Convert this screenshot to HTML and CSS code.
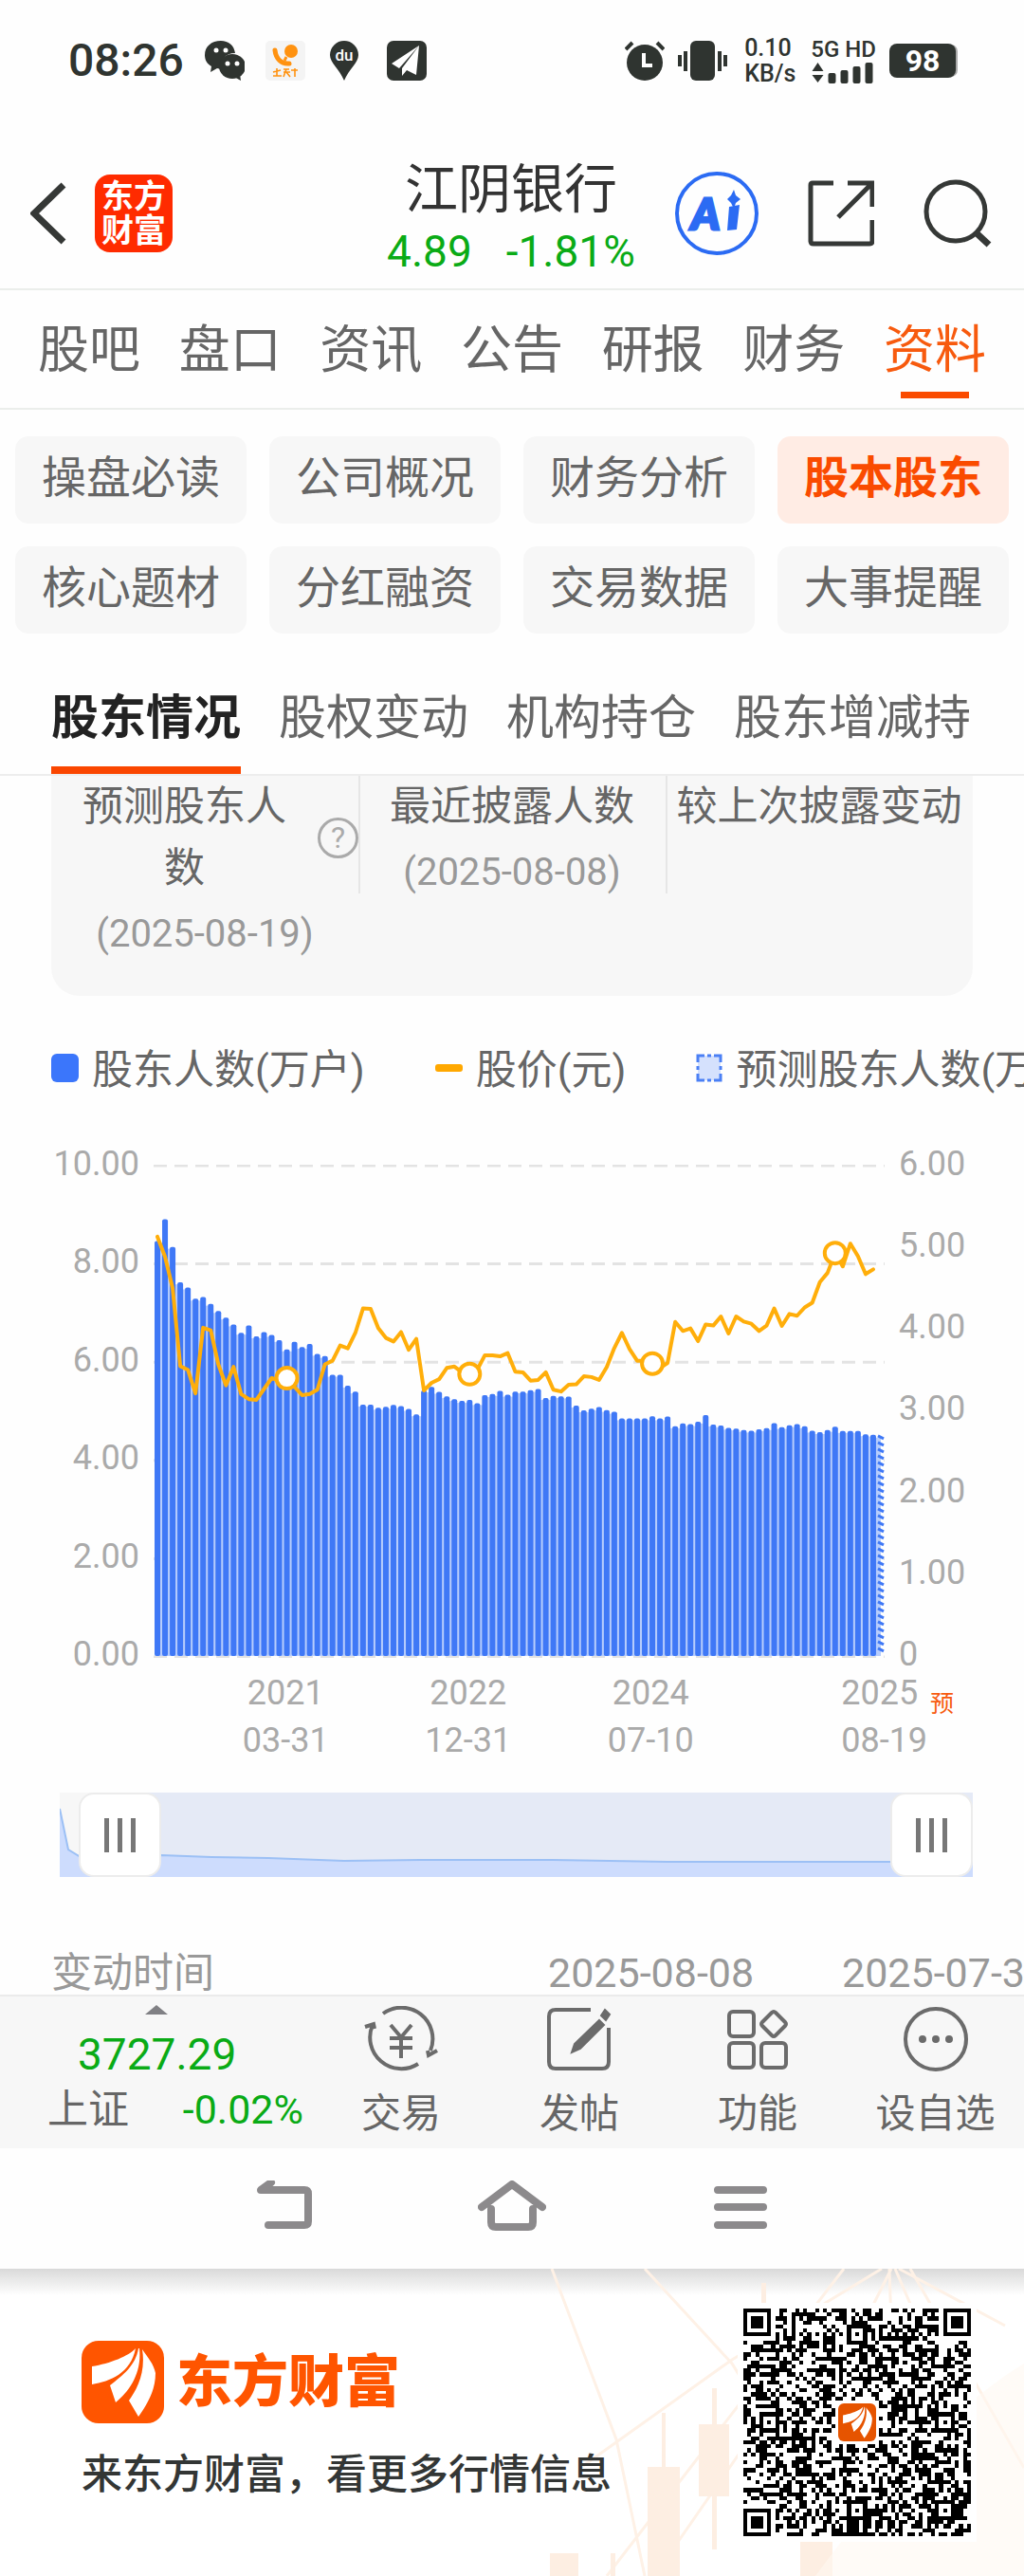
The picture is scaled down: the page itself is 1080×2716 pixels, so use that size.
FILE: index.html
```html
<!DOCTYPE html>
<html lang="zh-CN">
<head>
<meta charset="utf-8">
<meta name="viewport" content="width=device-width, initial-scale=1">
<title>江阴银行 股东情况</title>
<link rel="stylesheet" href="styles.css">
</head>
<body>
<svg class="defs" width="0" height="0" aria-hidden="true">
  <symbol id="brand" viewBox="0 0 87 87">
    <path fill="#fff" d="M57 8C50 16 30 24 11 27V46C30 43 52 34 57 8ZM60 8C57 26 44 36 30 47L36 65C50 54 64 34 61 8ZM64 9C68 34 58 52 50 63L60 80C70 66 78 52 78 34C76 24 70 18 64 9Z"/>
  </symbol>
</svg>

<div class="status">
  <span class="clock">08:26</span>
  <svg class="s-icon" viewBox="0 0 42 42"><path fill="#2f3430" d="M17 0C7 0 0 6 0 15c0 5 2 9 7 12l-1 6 7-4 4 1C15 20 22 13 32 13 31 5 25 0 17 0Z"/><ellipse cx="29" cy="27" rx="14" ry="13" fill="#2f3430"/><path fill="#2f3430" d="m31 38 7 4-1-7z"/><g fill="#fff"><circle cx="12" cy="10" r="2.5"/><circle cx="22" cy="10" r="2.5"/><circle cx="24" cy="24" r="2.5"/><circle cx="34" cy="24" r="2.5"/></g></svg>
  <svg class="s-icon" viewBox="0 0 42 42"><rect width="42" height="42" rx="5" fill="#f4f4f4"/><circle cx="27" cy="11" r="7" fill="#ff9210"/><path d="M10 10c1 9 7 15 15 14" fill="none" stroke="#ff9210" stroke-width="5" stroke-linecap="round"/><path d="m22 17-2 4" stroke="#ff9210" stroke-width="3"/><path d="M8 33l8-2M12 29v8M8 37h9M19 30h6M19 33h7M22 30l-3 8M22 33l4 5M27 31h7M31 29v9" stroke="#ff9210" stroke-width="1.6" fill="none"/></svg>
  <svg class="s-icon" viewBox="0 0 42 42"><path fill="#2f3430" d="M19 0A15 15 0 0 0 4 15c0 8 10 15 15 27 5-12 15-19 15-27A15 15 0 0 0 19 0Z"/><text x="19" y="21" text-anchor="middle" class="du">du</text></svg>
  <svg class="s-icon" viewBox="0 0 42 42"><rect width="42" height="42" rx="7" fill="#2f3430"/><path fill="#fff" d="M34 5 5 24l8 5zM34 5 16 29v8l5-6 10 5z"/></svg>
  <span class="grow"></span>
  <svg class="s-icon" viewBox="0 0 42 42"><circle cx="21" cy="23" r="19" fill="#2f3430"/><path d="m1 9 7-7M41 9l-7-7" stroke="#2f3430" stroke-width="4"/><path d="M20 13v13h9" stroke="#fff" stroke-width="4" fill="none"/></svg>
  <svg class="s-vibrate" viewBox="0 0 52 42"><rect x="13" width="26" height="42" rx="6" fill="#2f3430"/><path d="M2 15v12M8 11v21M44 11v21M50 15v12" stroke="#2f3430" stroke-width="4"/></svg>
  <span class="two-line">0.10<br>KB/s</span>
  <span class="signal"><b>5G HD</b>
    <svg class="bars" viewBox="0 0 65 22"><path fill="#2f3430" d="m7 0 6 9H1zM7 21l6-8H1z"/><g fill="#2f3430"><rect x="18" y="11" width="8" height="11" rx="2"/><rect x="31" y="8" width="8" height="14" rx="2"/><rect x="44" y="4" width="8" height="18" rx="2"/><rect x="57" width="8" height="22" rx="2"/></g></svg>
  </span>
  <span class="battery">98</span>
</div>

<header class="header">
  <div class="head-left">
    <button class="plain" aria-label="返回"><svg width="38" height="66" viewBox="0 0 38 66"><path d="M35 3 4 33l31 30" class="head-stroke thick"/></svg></button>
    <a class="app-logo" href="#home">东方财富</a>
  </div>
  <div class="stock">
    <h1>江阴银行</h1>
    <p class="quote"><span>4.89</span><span>-1.81%</span></p>
  </div>
  <div class="head-right">
    <button class="plain" aria-label="AI 助手"><svg width="88" height="88" viewBox="0 0 88 88"><circle cx="44" cy="44" r="42" fill="none" stroke="#2b6bf3" stroke-width="4"/><text x="17" y="61" class="ai">A</text><path d="m57 37 11-2-3 26-10 1zM62 19l2 6 5 4-5 4-2 6-3-6-4-4 4-4z" fill="#2b6bf3"/></svg></button>
    <button class="plain" aria-label="分享"><svg width="70" height="70" viewBox="0 0 70 70"><path d="M27 3H5Q3 3 3 5v59q0 3 3 3h59q3 0 3-3V42M42 3h26v25M67 4 32 39" class="head-stroke"/></svg></button>
    <button class="plain" aria-label="搜索"><svg width="72" height="72" viewBox="0 0 72 72"><circle cx="34" cy="34" r="31" class="head-stroke"/><path d="m55 56 14 13" class="head-stroke thick"/></svg></button>
  </div>
</header>

<nav class="tabs">
  <a href="#t1">股吧</a><a href="#t2">盘口</a><a href="#t3">资讯</a><a href="#t4">公告</a><a href="#t5">研报</a><a href="#t6">财务</a><a href="#t7" class="on">资料</a>
</nav>

<div class="chips">
  <button>操盘必读</button><button>公司概况</button><button>财务分析</button><button class="on">股本股东</button>
  <button>核心题材</button><button>分红融资</button><button>交易数据</button><button>大事提醒</button>
</div>

<nav class="subtabs">
  <a href="#s1" class="on">股东情况</a><a href="#s2">股权变动</a><a href="#s3">机构持仓</a><a href="#s4">股东增减持</a>
</nav>

<main class="content">
  <section class="summary">
    <div class="sum-col">
      <div class="sum-title"><span class="narrow">预测股东人数</span><button class="plain help" aria-label="说明">?</button></div>
      <span class="sum-date">(2025-08-19)</span>
    </div>
    <div class="sum-col ruled"><span>最近披露人数</span><span class="sum-date">(2025-08-08)</span></div>
    <div class="sum-col ruled"><span>较上次披露变动</span></div>
  </section>

  <div class="legend">
    <span class="key"><i class="k-bar"></i>股东人数(万户)</span>
    <span class="key"><i class="k-line"></i>股价(元)</span>
    <span class="key"><svg class="k-dash" viewBox="0 0 28 30"><rect x="2" y="2" width="24" height="26" fill="#d5e1fd"/><path d="M2 9V2h7M19 2h7v7M26 21v7h-7M9 28H2v-7M12 2h4M12 28h4M2 13v4M26 13v4" fill="none" stroke="#4b80f5" stroke-width="3"/></svg>预测股东人数(万户)</span>
  </div>

  <section class="chart">
    <div class="scale left"><span>10.00</span><span>8.00</span><span>6.00</span><span>4.00</span><span>2.00</span><span>0.00</span></div>
    <svg class="plot" id="plot" viewBox="0 0 771 520" role="img" aria-label="股东人数与股价"></svg>
    <div class="scale"><span>6.00</span><span>5.00</span><span>4.00</span><span>3.00</span><span>2.00</span><span>1.00</span><span>0</span></div>
  </section>
  <div class="dates">
    <span>2021<br>03-31</span><span>2022<br>12-31</span><span>2024<br>07-10</span><span class="last">2025<br>08-19</span><em>预</em>
  </div>

  <div class="range">
    <svg class="range-bg" viewBox="0 0 963 89" preserveAspectRatio="none">
      <rect width="963" height="89" fill="#e5eaf6"/><rect width="40" height="89" fill="#f7f7f7"/>
      <path d="M0 17 9 60 22 68 107 66 160 68 220 69 300 72 380 71 520 71 640 73 800 73 963 73V89H0z" fill="#cddcfd"/>
      <path d="M0 17 9 60 22 68 107 66 160 68 220 69 300 72 380 71 520 71 640 73 800 73 963 73" fill="none" stroke="#9cc0f5" stroke-width="2"/>
    </svg>
    <button class="grip start" aria-label="起始时间"><i></i><i></i><i></i></button>
    <button class="grip end" aria-label="结束时间"><i></i><i></i><i></i></button>
  </div>

  <div class="table-clip">
    <table class="history">
      <colgroup><col class="c-name"><col class="c-date"><col class="c-date"></colgroup>
      <tr><th scope="row">变动时间</th><td>2025-08-08</td><td>2025-07-31</td></tr>
    </table>
  </div>
</main>

<footer class="toolbar">
  <button class="index">
    <i class="tri"></i>
    <strong>3727.29</strong>
    <span class="index-row">上证<b>-0.02%</b></span>
  </button>
  <button class="tool"><svg viewBox="0 0 78 70"><path d="M20 8A33 33 0 0 1 70 47M57 61A33 33 0 0 1 9 20M1 22l9-3 1 5M77 47l-9 5-1-5M28 20l11 13 11-13M39 33v22M27 34h24M27 44h24"/></svg>交易</button>
  <button class="tool"><svg viewBox="0 0 78 70"><path d="M51 4H14Q7 4 7 11v48q0 7 7 7h49q7 0 7-7V23"/><path class="solid" d="m60 15 5 5-25 25-9 4 3-9zM66 4l5 5-4 6-5-5z"/></svg>发帖</button>
  <button class="tool"><svg viewBox="0 0 78 70"><rect x="9" y="6" width="26" height="26" rx="4"/><rect x="9" y="39" width="26" height="26" rx="4"/><rect x="43" y="39" width="26" height="26" rx="4"/><path d="m54 7-10 10q-2 2 0 4l10 10q2 2 4 0l10-10q2-2 0-4L58 7q-2-2-4 0z"/></svg>功能</button>
  <button class="tool"><svg viewBox="0 0 78 70"><circle cx="39" cy="35" r="32"/><g class="solid"><circle cx="25" cy="35" r="3"/><circle cx="39" cy="35" r="3"/><circle cx="53" cy="35" r="3"/></g></svg>设自选</button>
</footer>

<nav class="sysnav">
  <button class="plain" aria-label="返回"><svg width="60" height="54" viewBox="0 0 60 54"><path d="M14 47h38q4 0 4-4V14q0-4-4-4H6L17 2"/></svg></button>
  <button class="plain" aria-label="主页"><svg width="72" height="54" viewBox="0 0 72 54"><path d="M4 28 36 4l32 24M14 30v14q0 5 5 5h34q5 0 5-5V30"/></svg></button>
  <button class="plain" aria-label="最近任务"><svg width="60" height="54" viewBox="0 0 60 54"><path d="M6 10h48M6 28h48M6 47h48"/></svg></button>
</nav>

<section class="promo">
  <svg class="promo-art" viewBox="0 0 520 324" preserveAspectRatio="xMaxYMid slice" aria-hidden="true">
    <g fill="none" stroke="#fef1e6" stroke-width="3"><path d="M120 0 212 100 280 210M22 0 90 180 120 324M52 210 212 96 370 0M80 324 330 0M400 0 520 210M380 0 360 40M388 0 500 60M378 0 380 60M384 0 410 60M130 324 230 180"/></g>
    <g fill="#fdeee2"><rect x="243" y="15" width="5" height="60"/><rect x="123" y="209" width="34" height="115"/><rect x="138" y="152" width="4" height="60"/><rect x="177" y="164" width="32" height="76"/><rect x="191" y="126" width="5" height="170"/><rect x="284" y="280" width="34" height="44"/><rect x="20" y="300" width="30" height="24"/><rect x="84" y="300" width="5" height="24"/></g>
    <path fill="#fff9f1" opacity=".6" d="M300 324Q420 160 520 100V324z"/>
  </svg>
  <div class="promo-text">
    <div class="brand"><svg class="brand-mark"><use href="#brand"/></svg><strong>东方财富</strong></div>
    <p>来东方财富，看更多行情信息</p>
  </div>
  <div class="qr"><svg id="qr" viewBox="0 0 57 57" shape-rendering="crispEdges" role="img" aria-label="二维码"></svg><svg class="qr-mark"><use href="#brand"/></svg></div>
</section>
<script src="chart.js"></script>
</body>
</html>
```
FILE: styles.css
```css
* { box-sizing: border-box; }
body {
  margin: 0;
  background: #fefefe;
  color: #666;
  font-family: Roboto, "Noto Sans CJK SC", sans-serif;
  overflow-x: hidden;
}
h1, p { margin: 0; font-weight: 400; }
a { color: inherit; text-decoration: none; }
button { border: 0; padding: 0; background: none; color: inherit; font: inherit; }
svg { display: block; }
.plain { line-height: 0; }
.defs { position: absolute; }

/* phone status bar */
.status {
  display: flex;
  align-items: center;
  gap: 22px;
  padding: 32px 72px 4px;
  min-height: 100px;
  color: #2f3430;
}
.clock { font-size: 48px; line-height: 64px; font-weight: 500; }
.s-icon { width: 42px; height: 42px; }
.du { font: 500 17px Roboto, sans-serif; fill: #fff; }
.grow { flex: 1; }
.s-vibrate { width: 52px; height: 42px; margin-left: -8px; }
.two-line { font-size: 25px; line-height: 27px; font-weight: 500; margin-left: -4px; }
.signal { display: flex; flex-direction: column; gap: 2px; font-size: 24px; line-height: 24px; margin-left: -6px; }
.signal b { font-weight: 500; white-space: nowrap; }
.bars { width: 66px; height: 22px; }
.battery {
  width: 70px;
  margin-left: -8px;
  border-radius: 8px;
  background: #2f3430;
  color: #fff;
  font-size: 32px;
  line-height: 36px;
  font-weight: 700;
  text-align: center;
  box-shadow: 3px 0 0 -1px #aaa;
}

/* stock header */
.header {
  display: grid;
  grid-template-columns: 1fr auto 1fr;
  align-items: center;
  padding: 68px 34px 6px 32px;
  border-bottom: 2px solid #ebeeeb;
}
.head-left, .head-right { display: flex; align-items: center; padding-bottom: 16px; }
.head-left { gap: 30px; }
.head-right { gap: 52px; justify-content: flex-end; }
.head-stroke { fill: none; stroke: #353836; stroke-width: 5; }
.thick { stroke-width: 7; }
.app-logo {
  width: 82px;
  padding: 5px 7px;
  border-radius: 16px;
  background: #ff2b00;
  color: #fff;
  font-size: 34px;
  line-height: 36px;
  font-weight: 700;
  word-break: break-all;
}
.stock { text-align: center; }
.stock h1 { color: #333; font-size: 56px; line-height: 64px; }
.quote { display: flex; justify-content: center; gap: 36px; color: #0aab16; font-size: 46px; line-height: 66px; }
.ai { font: italic 900 46px Lato, sans-serif; fill: #2b6bf3; stroke: #2b6bf3; stroke-width: 3; }

.tabs {
  display: flex;
  justify-content: space-between;
  padding: 34px 40px 10px;
  border-bottom: 2px solid #ebeeeb;
  font-size: 54px;
  line-height: 60px;
}
.tabs a { padding-bottom: 20px; white-space: nowrap; }
.tabs .on {
  color: #f75a0e;
  background: linear-gradient(#fa4b00, #fa4b00) center bottom / 72px 7px no-repeat;
}

.chips {
  display: grid;
  grid-template-columns: repeat(4, 1fr);
  gap: 24px;
  padding: 28px 16px 0;
}
.chips button {
  height: 92px;
  padding-bottom: 4px;
  border-radius: 14px;
  background: #f7f7f7;
  font-size: 47px;
  line-height: 60px;
  white-space: nowrap;
}
.chips .on { background: #ffece4; color: #fa4b00; font-weight: 700; }

.subtabs {
  display: flex;
  gap: 40px;
  padding: 59px 54px 0;
  border-bottom: 2px solid #ededed;
  font-size: 50px;
  line-height: 60px;
}
.subtabs a { padding-bottom: 21px; border-bottom: 8px solid transparent; white-space: nowrap; }
.subtabs .on { color: #222; font-weight: 700; border-color: #fa4600; }

.content { padding: 0 54px; }
.summary {
  display: grid;
  grid-template-columns: repeat(3, 1fr);
  padding-bottom: 28px;
  border-radius: 0 0 30px 30px;
  background: #f7f7f7;
  font-size: 43px;
  line-height: 65px;
}
.sum-col { display: flex; flex-direction: column; text-align: center; white-space: nowrap; }
.ruled { background: linear-gradient(#e6e6e6, #e6e6e6) left top / 2px 124px no-repeat; }
.sum-title { display: flex; align-items: center; }
.narrow { flex: 1; padding: 0 20px; white-space: normal; }
.sum-date { color: #999; font-size: 40px; line-height: 74px; }
.help {
  width: 43px;
  height: 43px;
  border: 3px solid #aaa;
  border-radius: 50%;
  color: #aaa;
  font-size: 32px;
  line-height: 36px;
}

.legend {
  display: flex;
  gap: 74px;
  margin: 48px -54px 51px 0;
  overflow: hidden;
  font-size: 43px;
  line-height: 60px;
  white-space: nowrap;
}
.key { display: flex; align-items: center; flex: none; gap: 14px; }
.k-bar { width: 29px; height: 30px; margin-top: -4px; border-radius: 6px; background: #3b76fb; }
.k-line { width: 29px; height: 8px; margin-top: -4px; border-radius: 3px; background: #ffa800; }
.k-dash { width: 28px; height: 30px; margin-top: -4px; }

.chart {
  display: grid;
  grid-template-columns: 93px 1fr 78px;
  column-gap: 15px;
  color: #aaa;
  font-size: 36px;
  line-height: 36px;
}
.scale { display: flex; flex-direction: column; justify-content: space-between; }
.left { text-align: right; }
.plot { width: 100%; margin: 19px 0 14px; }
.bar { fill: #3f78f6; }
.gap-fill { fill: #b7cdfc; }
.grid-line { stroke: #e3e3e3; stroke-width: 3; stroke-dasharray: 14 8; }
.price { fill: none; stroke: #ffae0a; stroke-width: 4; stroke-linejoin: round; stroke-linecap: round; }
.dot { fill: #fff; stroke: #ffae0a; stroke-width: 4; }
.hatch { stroke: #3f78f6; stroke-width: 3; }

.dates {
  display: grid;
  grid-template-columns: 193fr 193fr 193fr 105fr 88fr 48fr;
  margin: -2px 0 0 151px;
  color: #aaa;
  font-size: 36px;
  line-height: 50px;
  text-align: center;
  white-space: nowrap;
}
.dates .last { grid-column: 5; text-align: left; }
.dates em { grid-column: 6; color: #f75a0e; font-size: 25px; font-style: normal; line-height: 74px; text-align: left; padding-left: 3px; }

.range { position: relative; height: 89px; margin: 30px 0 0 9px; }
.range-bg { width: 100%; height: 100%; }
.grip {
  position: absolute;
  top: 0;
  display: flex;
  align-items: center;
  justify-content: center;
  gap: 9px;
  width: 87px;
  height: 89px;
  border: 2px solid #ececec;
  border-radius: 16px;
  background: #fff;
}
.grip i { width: 5px; height: 36px; background: #777; }
.start { left: 20px; }
.end { right: 0; }

.table-clip { margin: 78px -54px 0 0; height: 46px; overflow: hidden; }
.history {
  table-layout: fixed;
  width: 1144px;
  border-collapse: collapse;
  color: #999;
  font-size: 43px;
  line-height: 46px;
  white-space: nowrap;
}
.c-name { width: 524px; }
.c-date { width: 310px; }
.history th { padding: 0; font-weight: 400; text-align: left; }
.history td { padding: 0; }

.toolbar {
  display: grid;
  grid-template-columns: 329fr 188fr 188fr 188fr 187fr;
  border-top: 2px solid #ebebeb;
  background: #f7f7f7;
  height: 162px;
}
.index { display: flex; flex-direction: column; align-items: center; padding: 9px 9px 0 50px; }
.tri { border: 12px solid transparent; border-top: 0; border-bottom: 10px solid #808084; align-self: flex-start; margin-left: 103px; }
.index strong { align-self: flex-start; margin: 12px 0 0 32px; color: #0aab16; font-size: 46px; line-height: 60px; font-weight: 400; }
.index-row { display: flex; justify-content: space-between; width: 100%; font-size: 43px; line-height: 56px; }
.index b { color: #0aab16; font-weight: 400; }
.tool { display: flex; flex-direction: column; align-items: center; gap: 14px; padding-top: 10px; font-size: 42px; line-height: 60px; white-space: nowrap; }
.tool svg { flex: none; width: 78px; height: 70px; fill: none; stroke: #6b6b6b; stroke-width: 4; }
.tool .solid { fill: #6b6b6b; stroke-width: 2; }

.sysnav { display: flex; justify-content: center; gap: 175px; padding: 34px 0 39px; }
.sysnav svg { fill: none; stroke: #8c8a8c; stroke-width: 8; stroke-linecap: round; stroke-linejoin: round; }

.promo {
  position: relative;
  display: flex;
  justify-content: space-between;
  align-items: flex-start;
  padding: 36px 50px 36px 86px;
  background: #fff;
  overflow: hidden;
}
.promo-art { position: absolute; right: 0; top: 0; width: 520px; height: 100%; }
.promo::before {
  content: "";
  position: absolute;
  inset: 0 0 auto;
  height: 28px;
  background: linear-gradient(#d9d9d9, rgba(255, 255, 255, 0));
}
.promo-text { position: relative; padding-top: 40px; }
.brand { display: flex; align-items: center; gap: 13px; color: #ff5500; }
.brand strong { font-size: 59px; line-height: 86px; font-weight: 900; }
.brand-mark { width: 87px; height: 87px; border-radius: 18px; background: #ff5500; }
.promo p { margin-top: 24px; color: #333635; font-size: 43px; line-height: 60px; font-weight: 500; white-space: nowrap; }
.qr { position: relative; padding: 6px; background: #fff; }
.qr svg { width: 240px; height: 240px; }
.qr .qr-mark {
  position: absolute;
  left: 106px;
  top: 106px;
  width: 40px;
  height: 40px;
  border-radius: 6px;
  background: #e65400;
}
```
FILE: chart.js
```js
const NS = 'http://www.w3.org/2000/svg';
function add(parent, name, attrs) {
  const el = document.createElementNS(NS, name);
  for (const k in attrs) el.setAttribute(k, attrs[k]);
  parent.appendChild(el);
  return el;
}

// Both series are stored on one axis: 102 is the top grid line, 1457 the baseline.
const holders = [310,250,326,424,438,469,464,483,503,521,540,563,543,573,561,569,583,609,588,602,594,621,627,679,679,709,725,761,761,770,767,762,765,773,788,722,712,726,738,746,751,748,757,735,732,723,734,725,725,721,718,743,737,738,739,764,777,772,768,776,781,799,799,799,799,793,799,794,821,813,815,808,790,816,819,825,827,831,833,829,826,812,823,818,815,821,833,837,831,822,834,834,834,843,844,847];
const price = [298,353,440,655,665,730,549,556,650,708,657,732,746,748,718,688,695,688,712,735,732,720,650,640,598,606,563,496,497,550,577,587,561,610,580,722,701,691,660,656,672,677,665,625,625,628,619,670,672,695,693,672,720,725,706,705,683,685,693,658,605,563,608,640,640,648,660,646,533,558,551,586,540,543,518,565,518,532,538,558,543,496,544,511,516,493,480,423,398,343,380,317,352,401,388];
const H = 518, W = 771, step = W / holders.length;
const yOf = v => (v - 102) * H / 1355 + 1;
const xOf = i => step * (i + 0.5);

const plot = document.getElementById('plot');
for (let i = 0; i <= 5; i++) {
  const y = 1 + H * i / 5;
  add(plot, 'line', { x1: 0, x2: W, y1: y, y2: y, class: 'grid-line' });
}
holders.forEach((v, i) => {
  const y = yOf(v), x = xOf(i);
  if (i === holders.length - 1) {
    for (let t = y; t < H - 3; t += 7) add(plot, 'line', { x1: x - 3, x2: x + 3, y1: t, y2: t + 3, class: 'hatch' });
    return;
  }
  const next = yOf(Math.max(v, holders[i + 1]));
  add(plot, 'rect', { x: x, y: next + 2, width: step, height: H - next - 2, class: 'gap-fill' });
  add(plot, 'rect', { x: x - 3, y: y, width: 6, height: H - y, rx: 2, class: 'bar' });
});
add(plot, 'polyline', { points: price.map((v, i) => xOf(i) + ',' + yOf(v)).join(' '), class: 'price' });
[17, 41, 65, 89].forEach(i => add(plot, 'circle', { cx: xOf(i), cy: yOf(price[i]), r: 11, class: 'dot' }));

// QR symbol, 57 x 57 modules
const qr = document.getElementById('qr'), N = 57;
let seed = 20250819;
const rand = () => (seed = (seed * 1103515245 + 12345) % 2147483648) / 2147483648;
const ring = (x, y, cx, cy) => Math.max(Math.abs(x - cx), Math.abs(y - cy));
let d = '';
for (let y = 0; y < N; y++) {
  for (let x = 0; x < N; x++) {
    let on = rand() < 0.5;
    if (x === 6 || y === 6) on = (x + y) % 2 === 0;
    for (const [cx, cy] of [[6, 28], [28, 6], [50, 28], [28, 50], [50, 50]]) {
      const r = ring(x, y, cx, cy);
      if (r <= 2) on = r !== 1;
    }
    for (const [cx, cy] of [[3, 3], [53, 3], [3, 53]]) {
      const r = ring(x, y, cx, cy);
      if (r <= 4) on = r !== 2 && r !== 4;
    }
    if (ring(x, y, 28, 28) <= 5) on = false;
    if (on) d += `M${x} ${y}h1v1h-1z`;
  }
}
add(qr, 'path', { d: d });
```
